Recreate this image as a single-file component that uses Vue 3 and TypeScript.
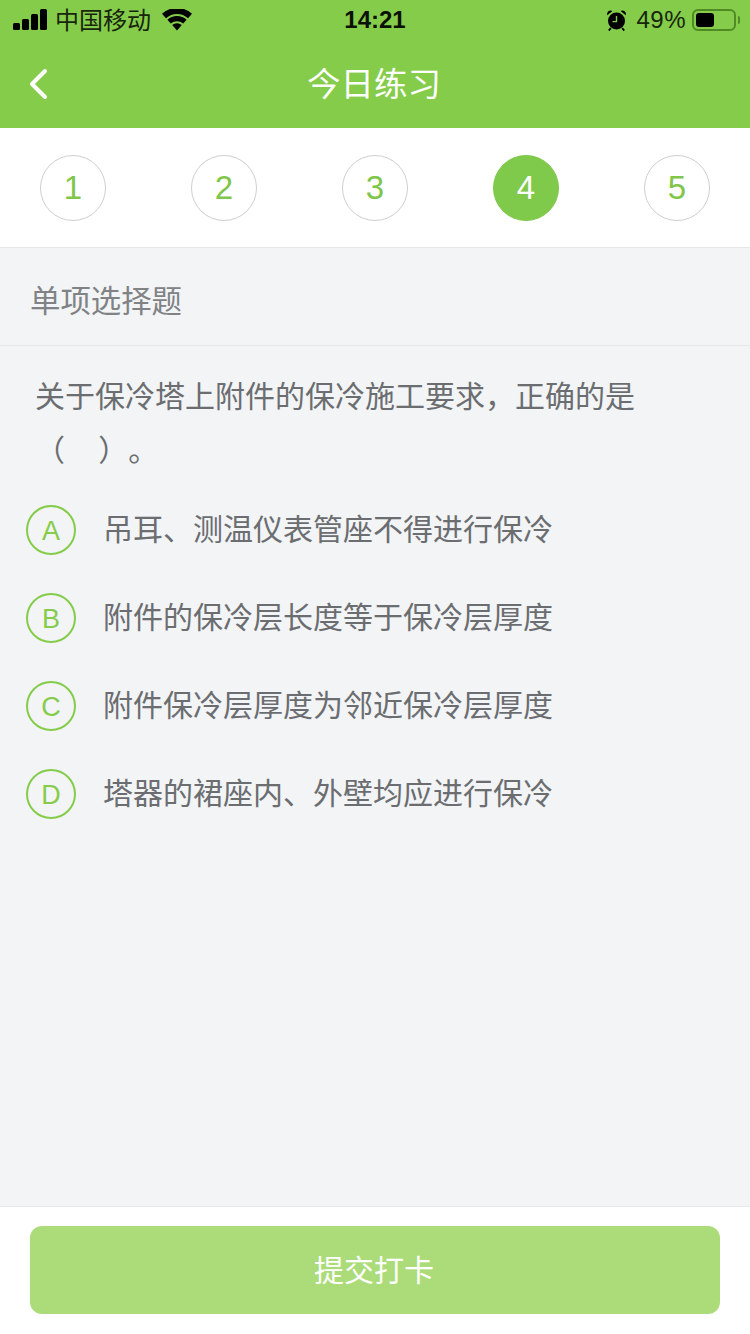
<script setup lang="ts">
// 今日练习页面
const steps = [1, 2, 3, 4, 5]
const currentStep = 4

const options = [
  { key: 'A', text: '吊耳、测温仪表管座不得进行保冷' },
  { key: 'B', text: '附件的保冷层长度等于保冷层厚度' },
  { key: 'C', text: '附件保冷层厚度为邻近保冷层厚度' },
  { key: 'D', text: '塔器的裙座内、外壁均应进行保冷' }
]
</script>

<template>
  <div class="page">
    <header class="header">
      <!-- 状态栏 -->
      <div class="status-bar">
        <div class="status-left">
          <svg class="signal" width="34" height="22" viewBox="0 0 34 22">
            <rect x="0" y="14" width="7" height="7" rx="1.5" />
            <rect x="9" y="10" width="7" height="11" rx="1.5" />
            <rect x="18" y="5" width="7" height="16" rx="1.5" />
            <rect x="27" y="0" width="7" height="21" rx="1.5" />
          </svg>
          <span class="carrier">中国移动</span>
          <svg class="wifi" width="30" height="22" viewBox="0 0 30 22">
            <path d="M15 21.5l-4.8-5.4a7 7 0 0 1 9.6 0z" />
            <path d="M8.8 14.5L5.4 10.7a14.3 14.3 0 0 1 19.2 0l-3.4 3.8a9.3 9.3 0 0 0-12.4 0z" />
            <path d="M4 9.2L0 4.8a22 22 0 0 1 30 0l-4 4.4a16.3 16.3 0 0 0-22 0z" />
          </svg>
        </div>
        <span class="time">14:21</span>
        <div class="status-right">
          <svg class="alarm" width="19" height="21" viewBox="0 0 19 21">
            <circle cx="9.5" cy="11" r="8.5" />
            <path d="M0.3 5.2A3.6 3.6 0 0 1 5.4 0.9zM18.7 5.2A3.6 3.6 0 0 0 13.6 0.9z" />
            <path d="M3.8 18l-2 2.6M15.2 18l2 2.6" stroke="#000" stroke-width="1.8" />
            <path d="M9.5 6v5.6H5.5" fill="none" stroke="#86cc4b" stroke-width="1.4" />
          </svg>
          <span class="percent">49%</span>
          <div class="battery">
            <div class="battery-level"></div>
          </div>
          <div class="battery-cap"></div>
        </div>
      </div>
      <!-- 导航栏 -->
      <div class="nav-bar">
        <svg class="back" width="20" height="32" viewBox="0 0 20 32">
          <path d="M17 3L4 16l13 13" />
        </svg>
        <span class="nav-title">今日练习</span>
      </div>
    </header>

    <div class="steps">
      <div
        v-for="step in steps"
        :key="step"
        class="step"
        :class="{ active: step === currentStep }"
      >
        {{ step }}
      </div>
    </div>

    <main class="content">
      <div class="type-row">单项选择题</div>
      <div class="question">关于保冷塔上附件的保冷施工要求，正确的是（&nbsp;&nbsp;&nbsp;&nbsp;）。</div>
      <ul class="options">
        <li v-for="opt in options" :key="opt.key" class="option">
          <span class="option-key">{{ opt.key }}</span>
          <span class="option-text">{{ opt.text }}</span>
        </li>
      </ul>
    </main>

    <footer class="footer">
      <button class="submit" type="button">提交打卡</button>
    </footer>
  </div>
</template>

<style scoped>
.page {
  width: 750px;
  height: 1334px;
  display: flex;
  flex-direction: column;
  background: #f2f4f6;
  font-family: "Liberation Sans", "Noto Sans CJK SC", sans-serif;
  overflow: hidden;
}

.header {
  background: #86cc4b;
  height: 128px;
  flex-shrink: 0;
}

.status-bar {
  height: 40px;
  display: flex;
  align-items: center;
  justify-content: space-between;
  padding: 0 10px 0 13px;
  position: relative;
  color: #000;
  font-size: 24px;
}

.status-left,
.status-right {
  display: flex;
  align-items: center;
}

.signal,
.wifi,
.alarm {
  fill: #000;
}

.carrier {
  margin-left: 8px;
  padding-bottom: 4px;
  color: #17260c;
}

.wifi {
  margin-left: 11px;
}

.time {
  position: absolute;
  left: 0;
  right: 0;
  text-align: center;
  font-weight: 700;
  color: #0a1205;
}

.percent {
  margin-left: 10px;
  color: #17260c;
  letter-spacing: 0.5px;
}

.battery {
  width: 44px;
  height: 22px;
  margin-left: 6px;
  padding: 2px;
  box-sizing: border-box;
  border: 2px solid #4f8a25;
  border-radius: 6px;
}

.battery-level {
  width: 18px;
  height: 100%;
  background: #000;
  border-radius: 3px;
}

.battery-cap {
  width: 2px;
  height: 8px;
  margin-left: 2px;
  background: #4f8a25;
  border-radius: 0 2px 2px 0;
}

.nav-bar {
  height: 88px;
  display: flex;
  align-items: center;
  justify-content: center;
  position: relative;
}

.back {
  position: absolute;
  left: 28px;
  top: 28px;
}

.back path {
  fill: none;
  stroke: #fff;
  stroke-width: 4;
  stroke-linecap: round;
  stroke-linejoin: round;
}

.nav-title {
  font-size: 33.5px;
  color: #fff;
  padding: 0 2px 5px 0;
}

.steps {
  height: 120px;
  flex-shrink: 0;
  box-sizing: border-box;
  background: #fff;
  border-bottom: 1px solid #e6e8ea;
  display: flex;
  justify-content: space-between;
  align-items: center;
  padding: 1px 40px 0;
}

.step {
  width: 66px;
  height: 66px;
  box-sizing: border-box;
  border: 1px solid #cfcfcf;
  border-radius: 50%;
  display: flex;
  align-items: center;
  justify-content: center;
  font-size: 33px;
  color: #7fc64a;
}

.step.active {
  background: #7fc94b;
  border-color: #7fc94b;
  color: #fff;
}

.content {
  flex: 1;
}

.type-row {
  height: 98px;
  box-sizing: border-box;
  border-bottom: 1px solid #e6e8ea;
  display: flex;
  align-items: center;
  padding: 4px 0 0 30px;
  font-size: 30.4px;
  color: #808285;
}

.question {
  width: 620px;
  margin: 24px 0 0 35px;
  font-size: 30px;
  line-height: 54px;
  color: #6b6d70;
  text-spacing-trim: space-all;
}

.options {
  list-style: none;
  margin: 8px 0 0;
  padding: 0 0 0 26px;
}

.option {
  height: 88px;
  display: flex;
  align-items: center;
}

.option-key {
  width: 50px;
  height: 50px;
  padding-top: 2px;
  box-sizing: border-box;
  border: 2px solid #86cc4b;
  border-radius: 50%;
  display: flex;
  align-items: center;
  justify-content: center;
  font-size: 27px;
  color: #86cc4b;
  flex-shrink: 0;
}

.option-text {
  margin-left: 27px;
  padding-bottom: 6px;
  font-size: 30px;
  color: #6b6d70;
}

.footer {
  height: 128px;
  flex-shrink: 0;
  box-sizing: border-box;
  background: #fff;
  border-top: 1px solid #e6e8ea;
  padding: 19px 30px 0;
}

.submit {
  display: block;
  width: 100%;
  height: 88px;
  border: 0;
  border-radius: 12px;
  background: #abdc79;
  color: #fff;
  font-family: inherit;
  font-size: 30px;
  padding: 0 2px 4px 0;
}
</style>
